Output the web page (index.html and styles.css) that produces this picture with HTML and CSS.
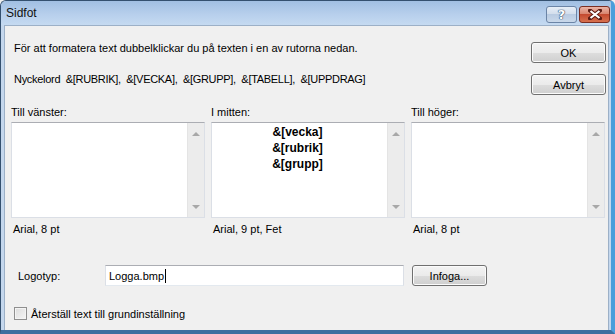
FILE: index.html
```html
<!DOCTYPE html>
<html lang="sv">
	<head>
		<meta charset="UTF-8" />
		<meta name="viewport" content="width=device-width, initial-scale=1.0" />
		<title>Sidfot</title>
		<link rel="stylesheet" href="styles.css">
	</head>

	<body>
		<div class="window">
			<div class="titlebar">
				<span class="title">Sidfot</span>
				<div class="caption-buttons">
					<div class="cap-btn help">?</div>
					<div class="cap-btn close">
						<svg width="14" height="11" viewBox="0 0 14 11">
							<path d="M2 1.5 L12 9.5 M12 1.5 L2 9.5" stroke="#5a1a12" stroke-width="4" stroke-linecap="square" />
							<path d="M2.5 2 L11.5 9 M11.5 2 L2.5 9" stroke="#fff" stroke-width="2.2" />
						</svg>
					</div>
				</div>
			</div>

			<div class="client">
				<div class="top">
					<div class="intro">
						<p>För att formatera text dubbelklickar du på texten i en av rutorna nedan.</p>
						<p class="keywords">Nyckelord  &amp;[RUBRIK],  &amp;[VECKA],  &amp;[GRUPP],  &amp;[TABELL],  &amp;[UPPDRAG]</p>
					</div>
					<div class="actions">
						<div class="btn">OK</div>
						<div class="btn">Avbryt</div>
					</div>
				</div>

				<div class="panels">
					<div class="panel">
						<div class="panel-label">Till vänster:</div>
						<div class="textbox">
							<div class="textbox-body"></div>
							<div class="scrollbar"><span class="arrow up"></span><span class="arrow down"></span></div>
						</div>
						<div class="panel-font">Arial, 8 pt</div>
					</div>
					<div class="panel">
						<div class="panel-label">I mitten:</div>
						<div class="textbox">
							<div class="textbox-body bold">
								<div>&amp;[vecka]</div>
								<div>&amp;[rubrik]</div>
								<div>&amp;[grupp]</div>
							</div>
							<div class="scrollbar"><span class="arrow up"></span><span class="arrow down"></span></div>
						</div>
						<div class="panel-font">Arial, 9 pt, Fet</div>
					</div>
					<div class="panel">
						<div class="panel-label">Till höger:</div>
						<div class="textbox">
							<div class="textbox-body"></div>
							<div class="scrollbar"><span class="arrow up"></span><span class="arrow down"></span></div>
						</div>
						<div class="panel-font">Arial, 8 pt</div>
					</div>
				</div>

				<div class="logo-row">
					<span class="logo-label">Logotyp:</span>
					<div class="input">Logga.bmp<span class="caret"></span></div>
					<div class="btn">Infoga...</div>
				</div>

				<div class="reset">
					<span class="checkbox"></span>
					<span>Återställ text till grundinställning</span>
				</div>
			</div>
		</div>
	</body>
</html>
```

FILE: styles.css
```css
* {
	box-sizing: border-box;
}

body {
	margin: 0;
	background: #f0f0f0;
	font-family: "Liberation Sans", Arial, sans-serif;
	font-size: 11px;
	color: #000;
}

.window {
	width: 615px;
	height: 334px;
	display: flex;
	flex-direction: column;
	background: #c4d7ed;
	border: 1px solid #34506f;
	border-right: 4px solid #4a9edb;
	border-bottom: 4px solid #3f6f9f;
	border-radius: 6px 6px 0 0;
	padding: 0 2px 0 3px;
	overflow: hidden;
}

/* title bar */
.titlebar {
	height: 24px;
	flex-shrink: 0;
	display: flex;
	align-items: center;
	justify-content: space-between;
	margin: 0 -2px 0 -3px;
	padding: 0 1px 0 5px;
	background: linear-gradient(#a1bfe2, #b7cfec 55%, #c5daf1);
}

.title {
	font-size: 12px;
	color: #111;
}

.caption-buttons {
	display: flex;
	gap: 2px;
	margin-top: 2px;
}

.cap-btn {
	width: 31px;
	height: 17px;
	border: 1px solid #6b84a6;
	border-radius: 3px;
	display: flex;
	align-items: center;
	justify-content: center;
}

.cap-btn.help {
	background: linear-gradient(#e7eef7, #d3deec 45%, #b9cbe2 50%, #c9d8ea);
	color: #fff;
	font-family: "DejaVu Sans", sans-serif;
	font-weight: bold;
	font-size: 13px;
	text-shadow: 0 0 1px #2b4566, 0 0 1px #2b4566, 0 0 1px #2b4566;
}

.cap-btn.close {
	border-color: #7b2e22;
	background: linear-gradient(#eab4a6, #d98670 45%, #c44a30 50%, #d7714f);
}

/* client area */
.client {
	flex: 1;
	background: #f0f0f0;
	border: 1px solid #9cb0c7;
	border-bottom: none;
	display: flex;
	flex-direction: column;
}

.top {
	display: flex;
	justify-content: space-between;
	padding: 15px 2px 0 9px;
}

.intro p {
	margin: 0;
	line-height: 14px;
	white-space: pre;
}
.intro p + p {
	margin-top: 17px;
}
.intro .keywords {
	letter-spacing: -0.3px;
}

.actions {
	display: flex;
	flex-direction: column;
	gap: 11px;
	margin-top: 1px;
}

.btn {
	width: 75px;
	height: 21px;
	display: flex;
	align-items: center;
	justify-content: center;
	border: 1px solid #707070;
	border-radius: 3px;
	background: linear-gradient(#f3f3f3, #ebebeb 50%, #dddddd 51%, #cfcfcf);
	box-shadow: inset 0 0 0 1px #fbfbfb;
}

/* panels */
.panels {
	display: grid;
	grid-template-columns: repeat(3, 194px);
	gap: 6px;
	padding-left: 6px;
	margin-top: 10px;
}

.panel-label {
	line-height: 14px;
	margin-bottom: 3px;
}

.textbox {
	height: 96px;
	display: flex;
	background: #fff;
	border: 1px solid #dbdfe6;
	border-top-color: #abadb3;
}

.textbox-body {
	flex: 1;
	padding-top: 1px;
	padding-right: 4px;
}
.textbox-body.bold {
	font-size: 12px;
	font-weight: bold;
	line-height: 16px;
	text-align: center;
}

.scrollbar {
	width: 17px;
	display: flex;
	flex-direction: column;
	justify-content: space-between;
	align-items: center;
	padding: 9px 0 8px;
	background: #ececec;
	border-left: 1px solid #e4e4e4;
}

.arrow {
	width: 0;
	height: 0;
	border-left: 4px solid transparent;
	border-right: 4px solid transparent;
}
.arrow.up {
	border-bottom: 4px solid #a8a8a8;
}
.arrow.down {
	border-top: 4px solid #a8a8a8;
}

.panel-font {
	line-height: 14px;
	margin-top: 4px;
	padding-left: 2px;
}

/* logotyp */
.logo-row {
	display: flex;
	align-items: center;
	margin-top: 29px;
	padding-left: 13px;
}

.logo-label {
	width: 87px;
}

.input {
	width: 299px;
	height: 21px;
	display: flex;
	align-items: center;
	padding-left: 3px;
	background: #fff;
	border: 1px solid #dbdfe6;
	border-top-color: #abadb3;
	border-bottom-color: #e3e9ef;
	margin-right: 8px;
}

.caret {
	width: 1px;
	height: 14px;
	background: #000;
	margin-left: 1px;
}

.reset {
	display: flex;
	align-items: center;
	gap: 4px;
	margin-top: 21px;
	padding-left: 9px;
}

.checkbox {
	width: 13px;
	height: 13px;
	border: 1px solid #8f8f8f;
	background: linear-gradient(135deg, #dcdcdc, #f6f6f6);
	box-shadow: inset 0 0 0 1px #f4f4f4;
}
```
